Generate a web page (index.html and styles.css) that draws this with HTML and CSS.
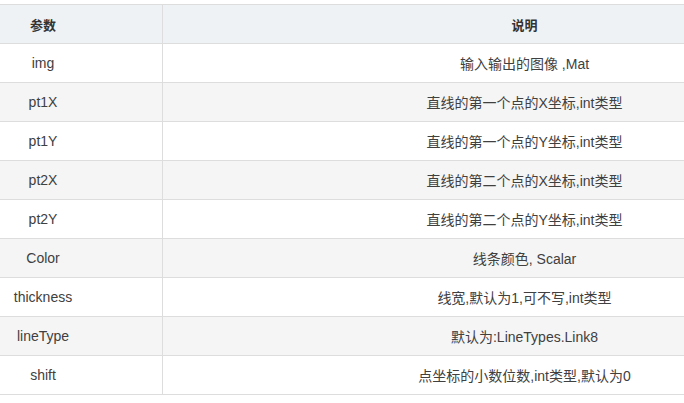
FILE: index.html
```html
<!DOCTYPE html>
<html>
<head>
<meta charset="utf-8">
<link rel="stylesheet" href="styles.css">
</head>
<body>
<div class="viewport">
<table class="params">
  <thead>
    <tr><th class="c1">参数</th><th class="c2">说明</th></tr>
  </thead>
  <tbody>
    <tr><td>img</td><td>输入输出的图像 ,Mat</td></tr>
    <tr><td>pt1X</td><td>直线的第一个点的X坐标,int类型</td></tr>
    <tr><td>pt1Y</td><td>直线的第一个点的Y坐标,int类型</td></tr>
    <tr><td>pt2X</td><td>直线的第二个点的X坐标,int类型</td></tr>
    <tr><td>pt2Y</td><td>直线的第二个点的Y坐标,int类型</td></tr>
    <tr><td>Color</td><td>线条颜色, Scalar</td></tr>
    <tr><td>thickness</td><td>线宽,默认为1,可不写,int类型</td></tr>
    <tr><td>lineType</td><td>默认为:LineTypes.Link8</td></tr>
    <tr><td>shift</td><td>点坐标的小数位数,int类型,默认为0</td></tr>
  </tbody>
</table>
</div>
</body>
</html>
```
FILE: styles.css
```css
html, body {
  margin: 0;
  padding: 0;
  background: #fff;
  overflow: hidden;
}
.viewport {
  width: 684px;
  height: 403px;
  overflow: hidden;
  padding-top: 4px;
  box-sizing: border-box;
}
.params {
  margin-left: -76px;
  border-collapse: collapse;
  table-layout: fixed;
  width: 961px;
  font-family: "Liberation Sans", Arial, "Noto Sans CJK SC", sans-serif;
  font-size: 14px;
  color: #404040;
}
.params .c1 { width: 238px; }
.params .c2 { width: 723px; }
.params th, .params td {
  height: 38px;
  padding: 0;
  text-align: center;
  vertical-align: middle;
  border: 1px solid #dddddd;
  border-left: none;
}
.params th:first-child, .params td:first-child {
  border-right: 1px solid #dddddd;
}
.params th {
  background: #eff2f5;
  font-weight: bold;
  color: #333;
  font-size: 13px;
}
.params tbody tr:nth-child(even) td {
  background: #f5f5f5;
}
```
